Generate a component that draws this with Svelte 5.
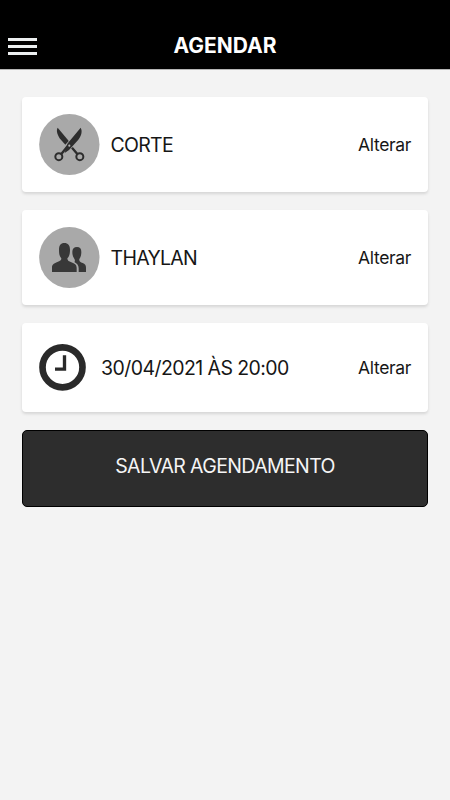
<script>
  const cards = [
    { icon: 'scissors', label: 'CORTE' },
    { icon: 'people', label: 'THAYLAN' },
    { icon: 'clock', label: '30/04/2021 ÀS 20:00' }
  ];
</script>

<div class="screen">
  <header>
    <button class="menu" aria-label="Menu"><i></i><i></i><i></i></button>
    <h1>AGENDAR</h1>
  </header>

  <main>
    {#each cards as card}
      <section class="card {card.icon}">
        {#if card.icon === 'scissors'}
          <svg class="badge" viewBox="27 27 183 183">
            <ellipse cx="118" cy="118.5" rx="90.5" ry="91.5" fill="#a9a9a9" />
            <g fill="none" stroke="#2d2d2d">
              <circle cx="86.5" cy="155" r="10.5" stroke-width="6" />
              <circle cx="149.5" cy="155" r="10.5" stroke-width="6" />
              <path d="M94 147L114 122M142 147L126 128" stroke-width="7" />
            </g>
            <path fill="#2d2d2d" d="M83 68C78 76 82 90 90 101L106 119L117 109Z" />
            <path fill="#2d2d2d" d="M152 68C158 79 154 92 145 104L126 125L117 135L104 144L112 116Z" />
            <path fill="none" stroke="#a9a9a9" stroke-width="1.8" d="M118 106L108 119" />
            <circle cx="118" cy="122" r="3.2" fill="#b5b5b5" />
          </svg>
        {:else if card.icon === 'people'}
          <svg class="badge" viewBox="27 27 183 183">
            <ellipse cx="118" cy="118.5" rx="90.5" ry="91.5" fill="#a9a9a9" />
            <g fill="#383838">
              <path d="M66 162V148C66 139 73 136 82 132C90 129 94 128 94 121C88 114 87 106 87 95C87 82 92 75 103 75C114 75 120 82 120 95C120 107 118 115 112 121C112 129 117 130 124 133C134 137 140 140 140 149V162Z" />
              <path d="M146 162V151C146 142 141 136 133 132C136 129 135 126 132 121C128 115 127 108 127 101C127 92 132 87 141 87C150 87 154 92 154 102C154 111 152 118 148 123C147 130 151 132 158 135C165 138 168 142 168 149V162Z" />
            </g>
          </svg>
        {:else}
          <svg class="dial" viewBox="27 28 141 141">
            <circle cx="97.5" cy="98" r="60" fill="none" stroke="#2a2a2a" stroke-width="20" />
            <path d="M103.5 62V103.5H75" fill="none" stroke="#2a2a2a" stroke-width="10" />
          </svg>
        {/if}
        <span class="label">{card.label}</span>
        <button class="change">Alterar</button>
      </section>
    {/each}
    <button class="save">SALVAR AGENDAMENTO</button>
  </main>
</div>

<style>
  :global(body) { margin: 0; background: #f3f3f3; }
  .screen { min-height: 800px; background: #f3f3f3; font-family: Inter, "Liberation Sans", sans-serif; color: #161616; }
  button { border: 0; padding: 0; background: none; color: inherit; font-family: inherit; }
  header {
    box-sizing: border-box; height: 69px; padding: 23px 8px 0; background: #000; color: #fff;
    display: grid; grid-template-columns: 29px 1fr 29px; align-items: center;
    box-shadow: 0 1px 0 #b5b5b5;
  }
  .menu { display: flex; flex-direction: column; gap: 4px; }
  .menu i { display: block; width: 29px; height: 3px; background: #eceff0; }
  h1 { margin: 0; text-align: center; font-size: 21px; line-height: 24px; font-weight: 650; }
  main { display: flex; flex-direction: column; gap: 18px; padding: 28px 22px 0; }
  .card {
    box-sizing: border-box; height: 95px; padding: 0 17px; display: flex; align-items: center;
    background: #fff; border-radius: 4px; box-shadow: 0 2px 3px rgba(0, 0, 0, 0.12);
  }
  .clock { height: 89px; }
  svg { flex: none; display: block; }
  .badge { width: 61px; height: 61px; margin-right: 10.5px; }
  .dial { width: 47px; height: 47px; margin-right: 15px; }
  .label { font-size: 19.5px; font-weight: 400; letter-spacing: -0.7px; white-space: nowrap; }
  .clock .label { letter-spacing: -0.57px; }
  .change { margin-left: auto; font-size: 17.5px; font-weight: 400; letter-spacing: -0.35px; }
  .save {
    box-sizing: border-box; height: 77px; padding-bottom: 5px; background: #2d2d2d; border: 1px solid #000;
    border-radius: 5px; color: #f5f5f5; font-size: 19.5px; font-weight: 400; letter-spacing: -0.62px;
  }
</style>
